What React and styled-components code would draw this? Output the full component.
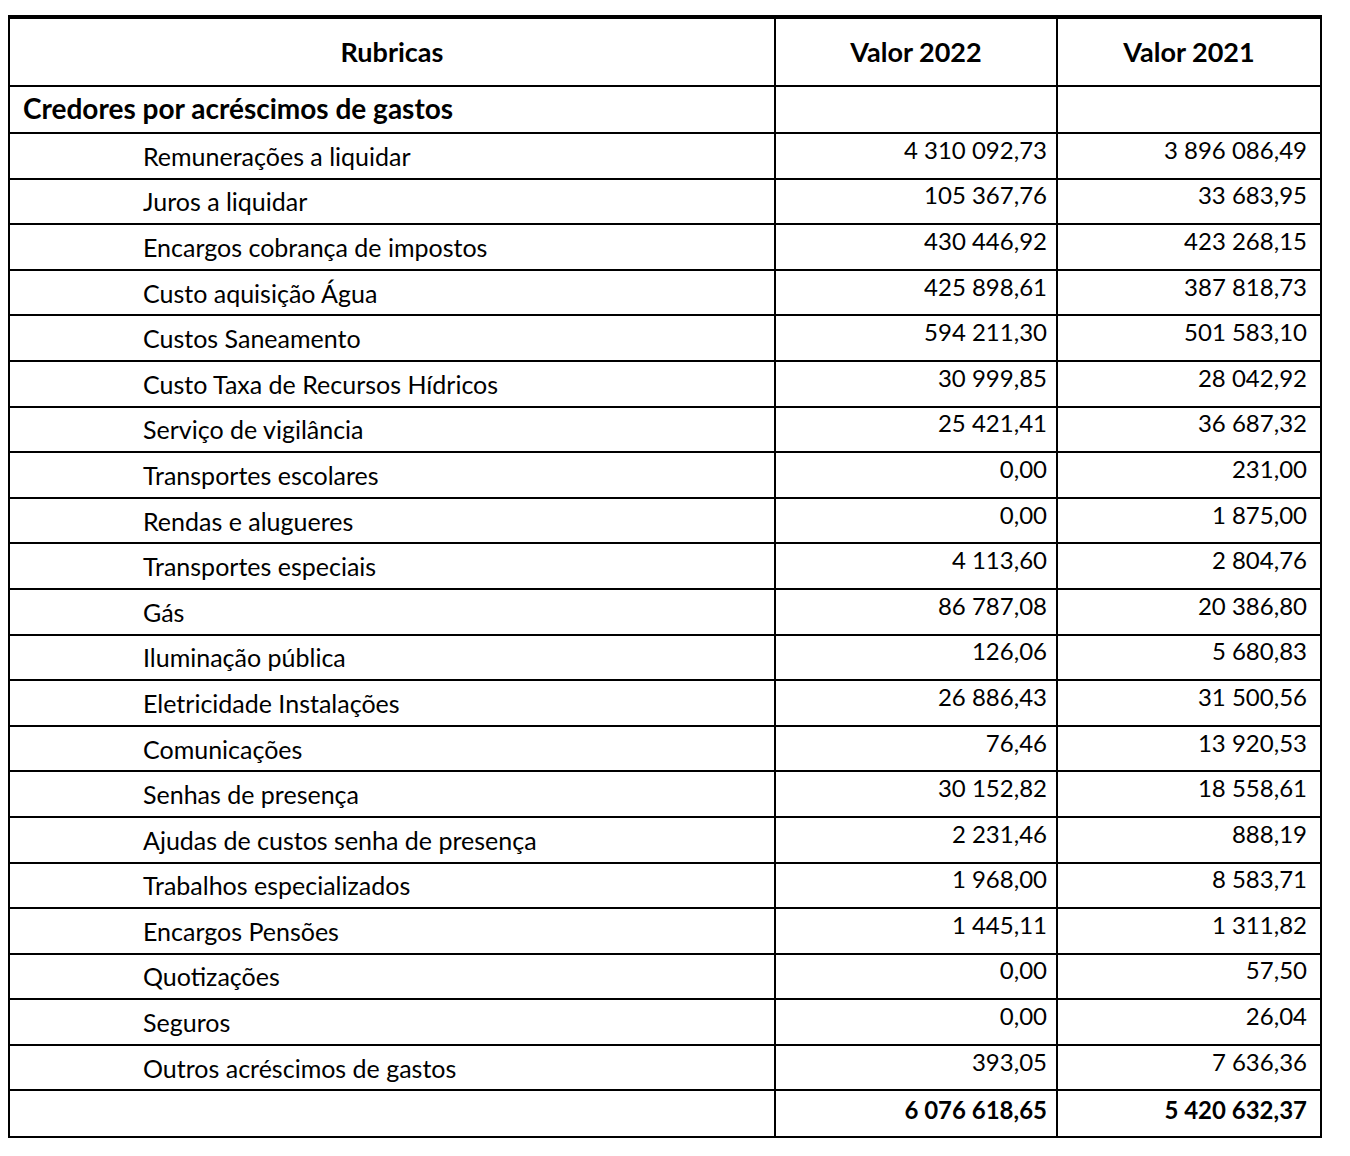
import React from "react";
import styled, { createGlobalStyle } from "styled-components";

const rows = [
  ["Remunerações a liquidar", "4 310 092,73", "3 896 086,49"],
  ["Juros a liquidar", "105 367,76", "33 683,95"],
  ["Encargos cobrança de impostos", "430 446,92", "423 268,15"],
  ["Custo aquisição Água", "425 898,61", "387 818,73"],
  ["Custos Saneamento", "594 211,30", "501 583,10"],
  ["Custo Taxa de Recursos Hídricos", "30 999,85", "28 042,92"],
  ["Serviço de vigilância", "25 421,41", "36 687,32"],
  ["Transportes escolares", "0,00", "231,00"],
  ["Rendas e alugueres", "0,00", "1 875,00"],
  ["Transportes especiais", "4 113,60", "2 804,76"],
  ["Gás", "86 787,08", "20 386,80"],
  ["Iluminação pública", "126,06", "5 680,83"],
  ["Eletricidade Instalações", "26 886,43", "31 500,56"],
  ["Comunicações", "76,46", "13 920,53"],
  ["Senhas de presença", "30 152,82", "18 558,61"],
  ["Ajudas de custos senha de presença", "2 231,46", "888,19"],
  ["Trabalhos especializados", "1 968,00", "8 583,71"],
  ["Encargos Pensões", "1 445,11", "1 311,82"],
  ["Quotizações", "0,00", "57,50"],
  ["Seguros", "0,00", "26,04"],
  ["Outros acréscimos de gastos", "393,05", "7 636,36"],
];

const GlobalStyle = createGlobalStyle`
  body {
    margin: 0;
    background: #fff;
    font-family: Lato, "Liberation Sans", sans-serif;
    color: #000;
  }
`;

const Page = styled.div`
  padding: 15px 0 0 8px;
`;

const Table = styled.table`
  border-collapse: collapse;
  width: 1312px;
  table-layout: fixed;
  border-top: 4px solid #000;
`;

const Row = styled.tr`
  height: ${(p) => p.$h}px;
`;

const Head = styled.th`
  border: 2px solid #000;
  border-top: 4px solid #000;
  font-size: 27px;
  font-weight: 700;
  text-align: center;
  vertical-align: middle;
  padding: 0 0 2px;
`;

const Section = styled.td`
  border: 2px solid #000;
  font-size: 28px;
  font-weight: 700;
  padding: 0 0 4px 13px;
  vertical-align: middle;
  white-space: nowrap;
`;

const Label = styled.td`
  border: 2px solid #000;
  font-size: 25px;
  padding: 0 0 0 133px;
  vertical-align: middle;
  white-space: nowrap;
`;

const Num = styled.td`
  border: 2px solid #000;
  font-size: 24px;
  font-weight: ${(p) => (p.$bold ? 700 : 400)};
  text-align: right;
  vertical-align: middle;
  padding: 0 ${(p) => p.$pr}px ${(p) => p.$pb}px 0;
`;

export default function App() {
  return (
    <Page>
      <GlobalStyle />
      <Table>
        <colgroup>
          <col style={{ width: 766 }} />
          <col style={{ width: 282 }} />
          <col style={{ width: 264 }} />
        </colgroup>
        <thead>
          <Row $h={69}>
            <Head>Rubricas</Head>
            <Head>Valor 2022</Head>
            <Head>Valor 2021</Head>
          </Row>
        </thead>
        <tbody>
          <Row $h={47}>
            <Section>Credores por acréscimos de gastos</Section>
            <Num $pr={9} $pb={13} />
            <Num $pr={13} $pb={13} />
          </Row>
          {rows.map(([label, a, b]) => (
            <Row $h={45.6} key={label}>
              <Label>{label}</Label>
              <Num $pr={9} $pb={13}>{a}</Num>
              <Num $pr={13} $pb={13}>{b}</Num>
            </Row>
          ))}
          <Row $h={47}>
            <Label />
            <Num $pr={9} $pb={8} $bold>6 076 618,65</Num>
            <Num $pr={13} $pb={8} $bold>5 420 632,37</Num>
          </Row>
        </tbody>
      </Table>
    </Page>
  );
}
